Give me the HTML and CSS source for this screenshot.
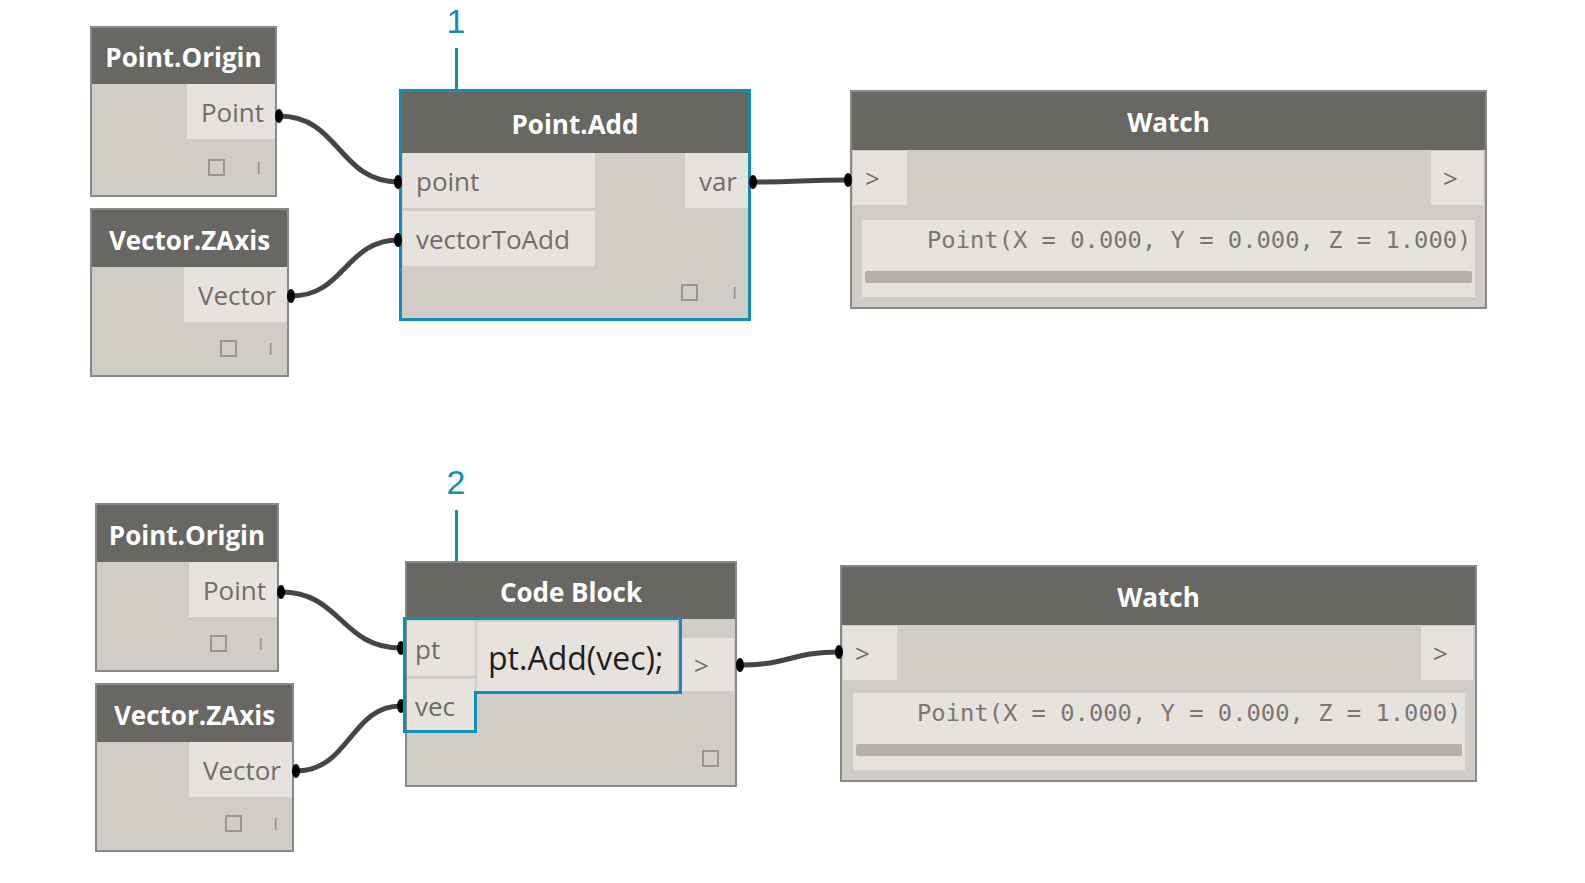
FILE: index.html
```html
<!DOCTYPE html>
<html>
  <head>
    <meta charset="utf-8">
    <title>Point.Add / Code Block</title>
    <link rel="stylesheet" href="styles.css">
  </head>
  <body>
    <div class="canvas">

      <!-- 1: Point.Add node -->
      <div class="callout c1">
        <span class="num">1</span>
        <span class="stem"></span>
      </div>

      <div class="node n-origin1">
        <div class="head">Point.Origin</div>
        <div class="ports">
          <div class="port out">Point</div>
        </div>
        <div class="foot"><span class="check"></span><span class="lace">I</span></div>
      </div>

      <div class="node n-zaxis1">
        <div class="head">Vector.ZAxis</div>
        <div class="ports">
          <div class="port out">Vector</div>
        </div>
        <div class="foot"><span class="check"></span><span class="lace">I</span></div>
      </div>

      <div class="node selected n-add">
        <div class="head">Point.Add</div>
        <div class="ports">
          <div class="ins">
            <div class="port in">point</div>
            <div class="port in">vectorToAdd</div>
          </div>
          <div class="port out">var</div>
        </div>
        <div class="foot"><span class="check"></span><span class="lace">I</span></div>
      </div>

      <div class="node watch n-watch1">
        <div class="head">Watch</div>
        <div class="ports">
          <div class="port in">&gt;</div>
          <div class="port out">&gt;</div>
        </div>
        <div class="result">
          <div class="value">Point(X = 0.000, Y = 0.000, Z = 1.000)</div>
          <div class="scroll"></div>
        </div>
      </div>

      <!-- 2: code block -->
      <div class="callout c2">
        <span class="num">2</span>
        <span class="stem"></span>
      </div>

      <div class="node n-origin2">
        <div class="head">Point.Origin</div>
        <div class="ports">
          <div class="port out">Point</div>
        </div>
        <div class="foot"><span class="check"></span><span class="lace">I</span></div>
      </div>

      <div class="node n-zaxis2">
        <div class="head">Vector.ZAxis</div>
        <div class="ports">
          <div class="port out">Vector</div>
        </div>
        <div class="foot"><span class="check"></span><span class="lace">I</span></div>
      </div>

      <div class="node n-code">
        <div class="head">Code Block</div>
        <div class="cb-body">
          <div class="ins">
            <div class="port in">pt</div>
            <div class="port in">vec</div>
          </div>
          <div class="cb-code">pt.Add(vec);</div>
          <div class="port out">&gt;</div>
        </div>
        <div class="foot"><span class="check"></span></div>
      </div>

      <div class="node watch n-watch2">
        <div class="head">Watch</div>
        <div class="ports">
          <div class="port in">&gt;</div>
          <div class="port out">&gt;</div>
        </div>
        <div class="result">
          <div class="value">Point(X = 0.000, Y = 0.000, Z = 1.000)</div>
          <div class="scroll"></div>
        </div>
      </div>

      <!-- wires + selection outline -->
      <svg class="overlay" width="1585" height="883" viewBox="0 0 1585 883">
        <g class="wire">
          <path d="M279,116 C340,116 338,182 399,182"/>
          <path d="M291,296 C345,296 345,240 399,240"/>
          <path d="M752,182 C800,182 800,180 849,180"/>
          <path d="M281,592 C341,592 341,648 401,648"/>
          <path d="M296,771 C350,771 350,706 401,706"/>
          <path d="M740,665 C790,665 790,652 840,652"/>
        </g>
        <g class="pin">
          <ellipse cx="279" cy="116" rx="4" ry="7"/>
          <ellipse cx="291" cy="296" rx="4" ry="7"/>
          <ellipse cx="398" cy="182" rx="4" ry="7"/>
          <ellipse cx="398" cy="240" rx="4" ry="7"/>
          <ellipse cx="753" cy="182" rx="4" ry="7"/>
          <ellipse cx="848" cy="180" rx="4" ry="7"/>
          <ellipse cx="281" cy="592" rx="4" ry="7"/>
          <ellipse cx="296" cy="771" rx="4" ry="7"/>
          <ellipse cx="401" cy="648" rx="4" ry="7"/>
          <ellipse cx="401" cy="706" rx="4" ry="7"/>
          <ellipse cx="740" cy="665" rx="4" ry="7"/>
          <ellipse cx="839" cy="652" rx="4" ry="7"/>
        </g>
        <path class="mark" d="M404.5,618.5 H680.5 V692.5 H475.5 V731.5 H404.5 Z"/>
      </svg>
    </div>
  </body>
</html>
```

FILE: styles.css
```css
body {
  margin: 0;
  background: #fff;
}
.canvas {
  position: relative;
  width: 1585px;
  height: 883px;
  overflow: hidden;
  font-family: "Open Sans", "Noto Sans", sans-serif;
}

/* nodes */
.node {
  position: absolute;
  box-sizing: border-box;
  display: flex;
  flex-direction: column;
  background: #d0ccc6;
  border: 2px solid #8b8885;
}
.node.selected {
  border: 3px solid #118fb2;
}
.head {
  flex: none;
  height: 57px;
  padding-top: 2px;
  box-sizing: border-box;
  background: #696764;
  color: #fff;
  font-size: 26px;
  font-weight: 700;
  display: flex;
  align-items: center;
  justify-content: center;
}
.ports {
  display: flex;
  justify-content: space-between;
  align-items: flex-start;
}
.ports .port.out:only-child {
  margin-left: auto;
}
.ins {
  display: flex;
  flex-direction: column;
  gap: 3px;
}
.port {
  box-sizing: border-box;
  height: 55px;
  background: #e6e3de;
  color: #6f6c69;
  font-size: 26px;
  display: flex;
  align-items: center;
}
.port.in {
  padding-left: 12px;
}
.port.out {
  justify-content: flex-end;
  padding: 0 11px 0 14px;
}
.foot {
  flex: 1;
  display: flex;
  align-items: center;
  justify-content: flex-end;
  gap: 31px;
  padding-right: 14px;
}
.check {
  width: 17px;
  height: 17px;
  box-sizing: border-box;
  border: 2px solid #9a9692;
}
.lace {
  font-size: 17px;
  line-height: 1;
  color: #8f8b99;
}

/* placement on the canvas */
.n-origin1 { left: 90px;  top: 26px;  width: 187px; height: 171px; }
.n-zaxis1  { left: 90px;  top: 208px; width: 199px; height: 169px; }
.n-add     { left: 399px; top: 89px;  width: 352px; height: 232px; }
.n-watch1  { left: 850px; top: 90px;  width: 637px; height: 219px; }
.n-origin2 { left: 95px;  top: 503px; width: 184px; height: 169px; }
.n-zaxis2  { left: 95px;  top: 683px; width: 199px; height: 169px; }
.n-code    { left: 405px; top: 561px; width: 332px; height: 226px; }
.n-watch2  { left: 840px; top: 565px; width: 637px; height: 217px; }

.n-origin1 .head { height: 56px; }
.n-add .head { height: 61px; }
.n-add .ins { width: 192px; margin-left: 1px; }
.n-add .port.in { padding-left: 13px; }
.n-add .foot { gap: 34px; padding-right: 11px; }

/* watch */
.watch .head { height: 58px; }
.watch .ports { margin-top: 1px; }
.watch .port {
  height: 54px;
  padding: 0 0 0 12px;
  justify-content: flex-start;
}
.watch .port.in { width: 54px; margin-left: 1px; }
.watch .port.out { width: 52px; margin-right: 2px; }
.result {
  height: 77px;
  margin: 15px 10px 0 10px;
  background: #e6e3de;
  overflow: hidden;
}
.n-watch2 .result { margin: 13px 10px 0 11px; }
.value {
  margin-top: 6px;
  padding-left: 65px;
  height: 28px;
  line-height: 28px;
  white-space: nowrap;
  font-family: "DejaVu Sans Mono", "Liberation Mono", monospace;
  font-size: 23.8px;
  color: #7a7672;
}
.n-watch2 .value { padding-left: 64px; }
.scroll {
  height: 12px;
  margin: 17px 3px 0 3px;
  background: #b3afaa;
  border-radius: 2px;
}

/* code block */
.n-code .head { height: 56px; }
.cb-body {
  display: flex;
  align-items: flex-start;
  margin-top: 2px;
}
.cb-body .ins { width: 68px; }
.cb-body .port.in { padding-left: 8px; }
.cb-body .port.in + .port.in { height: 53px; }
.cb-code {
  box-sizing: border-box;
  width: 200px;
  height: 70px;
  margin: 1px 0 0 2px;
  padding-left: 11px;
  background: #e6e3de;
  color: #1f1f1f;
  font-size: 32px;
  display: flex;
  align-items: center;
}
.cb-body .port.out {
  width: 52px;
  height: 53px;
  margin: 17px 0 0 5px;
  padding: 0 0 0 12px;
  justify-content: flex-start;
}
.n-code .foot { padding-right: 16px; }

/* callouts */
.callout {
  position: absolute;
  width: 20px;
  display: flex;
  flex-direction: column;
  align-items: center;
  color: #118fb2;
}
.callout .num {
  font-family: "Liberation Sans", Arial, sans-serif;
  font-size: 34px;
  line-height: 34px;
}
.callout .stem {
  width: 3px;
  margin-top: 10px;
  background: #118fb2;
}
.c1 { left: 446px; top: 4px; }
.c1 .stem { height: 42px; }
.c2 { left: 446px; top: 465px; }
.c2 .stem { height: 107px; margin-top: 11px; }

/* wires */
.overlay {
  position: absolute;
  left: 0;
  top: 0;
  pointer-events: none;
}
.wire path {
  fill: none;
  stroke: #454545;
  stroke-width: 5;
}
.pin ellipse {
  fill: #000;
}
.mark {
  fill: none;
  stroke: #118fb2;
  stroke-width: 3;
}
```
